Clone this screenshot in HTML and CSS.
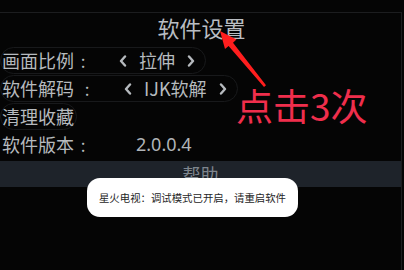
FILE: index.html
```html
<!DOCTYPE html>
<html lang="zh-CN">
<head>
<meta charset="utf-8">
<title>软件设置</title>
<link rel="stylesheet" href="styles.css">
</head>
<body>
<div class="screen">
  <div class="panel">
    <div class="title">软件设置</div>
    <div class="row row-pill">
      <span class="label">画面比例</span>
      <span class="colon colon-a">:</span>
      <span class="selector sel-ratio">
        <svg class="chev" viewBox="0 0 8 12"><polyline points="6,1.5 2,6 6,10.5"/></svg>
        <span class="value">拉伸</span>
        <svg class="chev" viewBox="0 0 8 12"><polyline points="2,1.5 6,6 2,10.5"/></svg>
      </span>
    </div>
    <div class="row row-pill">
      <span class="label">软件解码</span>
      <span class="colon colon-b">:</span>
      <span class="selector sel-decoder">
        <svg class="chev" viewBox="0 0 8 12"><polyline points="6,1.5 2,6 6,10.5"/></svg>
        <span class="value">IJK软解</span>
        <svg class="chev" viewBox="0 0 8 12"><polyline points="2,1.5 6,6 2,10.5"/></svg>
      </span>
    </div>
    <div class="row row-pill row-short">
      <span class="label">清理收藏</span>
    </div>
    <div class="row">
      <span class="label">软件版本</span>
      <span class="colon colon-a">:</span>
      <span class="version">2.0.0.4</span>
    </div>
    <div class="help">帮助</div>
  </div>

  <svg class="arrow" viewBox="0 0 404 270">
    <polygon points="220,31 236.5,39.5 233,42.8 266,85.2 264,87 228.6,46 225,49"/>
  </svg>
  <div class="note">点击3次</div>

  <div class="toast">星火电视：调试模式已开启，请重启软件</div>
</div>
</body>
</html>
```

FILE: styles.css
```css
html, body {
  margin: 0;
  padding: 0;
  background: #050505;
}

.screen {
  position: relative;
  width: 404px;
  height: 270px;
  overflow: hidden;
  background: #050505;
  font-family: "Noto Sans CJK SC", "Noto Sans", sans-serif;
  color: #b6babe;
}

.panel {
  margin-top: 12px;
  width: 401px;
  height: 258px;
  border-top: 1px solid #1c1d1f;
  border-right: 1px solid #1c1d1f;
  display: flex;
  flex-direction: column;
}

.title {
  height: 34px;
  line-height: 29px;
  text-align: center;
  font-size: 22px;
  color: #b9bdc2;
  padding-left: 2px;
}

.row {
  display: flex;
  align-items: center;
  height: 27px;
  width: max-content;
  box-sizing: border-box;
  border: 1px solid transparent;
  border-radius: 14px;
  margin-bottom: 1px;
  padding-left: 1px;
  font-size: 18px;
  line-height: 25px;
}

.row-pill {
  border-color: #18191b;
  padding-right: 10px;
}

.row-short {
  padding-right: 2px;
}

.label {
  width: 72px;
  white-space: nowrap;
}

.colon {
  width: 10px;
  text-align: center;
  font-size: 17px;
}

.colon-a {
  margin-left: 4px;
}

.colon-b {
  margin-left: 8px;
}

.selector {
  display: flex;
  align-items: center;
}

.sel-ratio {
  margin-left: 31px;
  gap: 12px;
}

.sel-decoder {
  margin-left: 32px;
  gap: 12px;
}

.chev {
  width: 8px;
  height: 12px;
  fill: none;
  stroke: #b6babe;
  stroke-width: 2.4;
  stroke-linecap: round;
  stroke-linejoin: round;
}

.value {
  white-space: nowrap;
}

.version {
  margin-left: 48px;
  font-family: "Noto Sans", sans-serif;
  font-size: 18px;
  color: #b0b4b8;
}

.help {
  margin-top: 2px;
  height: 26px;
  line-height: 26px;
  background: #1e232a;
  text-align: center;
  font-size: 18px;
  color: #7f868e;
}

.arrow {
  position: absolute;
  left: 0;
  top: 0;
  width: 404px;
  height: 270px;
  fill: #ff1e1e;
}

.note {
  position: absolute;
  left: 236px;
  top: 80px;
  font-size: 37px;
  line-height: 50px;
  color: #ef2e4c;
  white-space: nowrap;
}

.toast {
  position: absolute;
  left: 87px;
  top: 178px;
  width: 211px;
  height: 39px;
  border-radius: 13px;
  background: #ffffff;
  color: #262626;
  font-size: 10.4px;
  display: flex;
  align-items: center;
  justify-content: center;
  white-space: nowrap;
}
```
